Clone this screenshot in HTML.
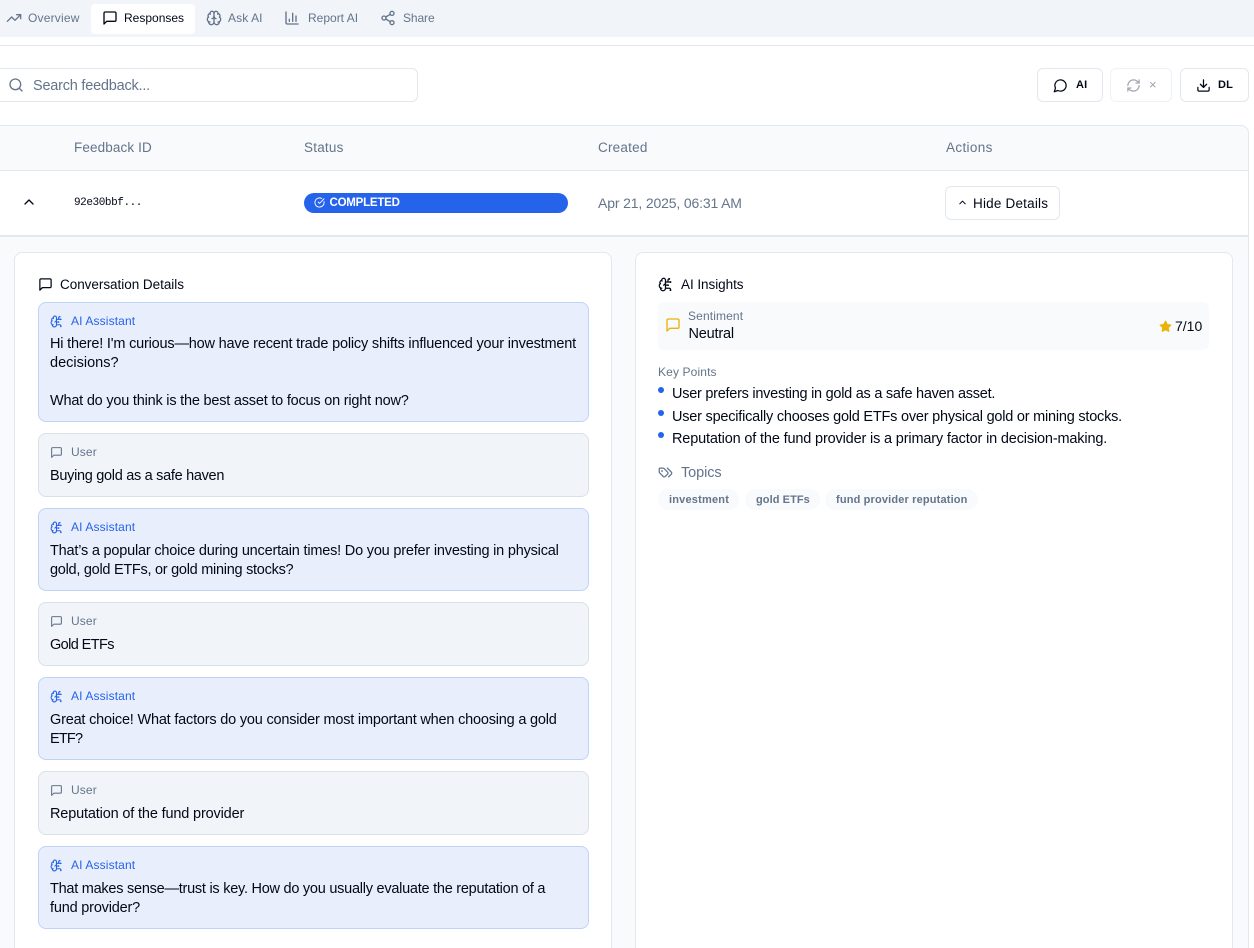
<!DOCTYPE html>
<html lang="en">
<head>
<meta charset="utf-8">
<title>Responses</title>
<style>
html,body{margin:0;padding:0;width:1254px;height:948px;overflow:hidden;background:#fff}
body{position:relative;font-family:"Liberation Sans",sans-serif;color:#020817}
.a{position:absolute;box-sizing:border-box}
.t{position:absolute;white-space:nowrap;font-size:14.5px;line-height:20px;letter-spacing:-.19px;color:#020817}
.s{position:absolute;fill:none;stroke:currentColor;stroke-width:2;stroke-linecap:round;stroke-linejoin:round}
.tab{font-size:12px;line-height:16px;color:#64748b;letter-spacing:.1px}
.hd{font-size:13.5px;line-height:20px;color:#64748b;letter-spacing:.22px}
.ai{background:#e8eefb;border:1px solid #bfd3f6;border-radius:8px;left:38px;width:551px}
.us{background:#f1f5f9;border:1px solid #d8e0ea;border-radius:8px;left:38px;width:551px}
.lb{font-size:12px;line-height:16px;letter-spacing:.13px}
.btn{background:#fff;border:1px solid #e2e8f0;border-radius:6px}
.dot{position:absolute;width:6px;height:6px;border-radius:50%;background:#2563eb;left:658px}
.pill{position:absolute;height:21px;border-radius:11px;background:#f8fafc;top:489px}
.pt{font-size:11px;font-weight:bold;line-height:16px;color:#64748b;letter-spacing:.2px}
.kp{font-size:14.5px;letter-spacing:-.22px}
.ti{font-size:13.5px;letter-spacing:0}
</style>
</head>
<body>
<svg width="0" height="0" style="position:absolute">
<defs>
<symbol id="msg" viewBox="0 0 24 24"><path d="M21 15a2 2 0 0 1-2 2H7l-4 4V5a2 2 0 0 1 2-2h14a2 2 0 0 1 2 2z"/></symbol>
<symbol id="bc" viewBox="0 0 24 24"><path d="M12 5a3 3 0 1 0-5.997.125 4 4 0 0 0-2.526 5.77 4 4 0 0 0 .556 6.588A4 4 0 1 0 12 18Z"/><path d="M9 13a4.5 4.5 0 0 0 3-4"/><path d="M6.003 5.125A3 3 0 0 0 6.401 6.5"/><path d="M3.477 10.896a4 4 0 0 1 .585-.396"/><path d="M6 18a4 4 0 0 1-1.967-.516"/><path d="M12 13h4"/><path d="M12 18h6a2 2 0 0 1 2 2v1"/><path d="M12 8h8"/><path d="M16 8V5a2 2 0 0 1 2-2"/><circle cx="16" cy="13" r=".5"/><circle cx="18" cy="3" r=".5"/><circle cx="20" cy="21" r=".5"/><circle cx="20" cy="8" r=".5"/></symbol>
</defs>
</svg>

<!-- tab bar -->
<div class="a" style="left:0;top:0;width:1254px;height:37px;background:#f1f5f9"></div>
<div class="a" style="left:0;top:45px;width:1254px;height:1px;background:#e2e8f0"></div>
<div class="a" style="left:91px;top:4px;width:104px;height:30px;background:#fff;border-radius:4px"></div>

<svg class="s" style="left:6px;top:10px;color:#64748b" width="16" height="16" viewBox="0 0 24 24"><polyline points="22 7 13.5 15.5 8.5 10.5 2 17"/><polyline points="16 7 22 7 22 13"/></svg>
<div class="t tab" style="left:28px;top:10px;letter-spacing:.2px">Overview</div>
<svg class="s" style="left:101.5px;top:10px;color:#020817" width="16" height="16"><use href="#msg"/></svg>
<div class="t tab" style="left:124px;top:10px;color:#020817;letter-spacing:0">Responses</div>
<svg class="s" style="left:205.5px;top:10px;color:#64748b" width="16" height="16" viewBox="0 0 24 24"><path d="M12 18V5"/><path d="M15 13a4.17 4.17 0 0 1-3-4 4.17 4.17 0 0 1-3 4"/><path d="M17.598 6.5A3 3 0 1 0 12 5a3 3 0 1 0-5.598 1.5"/><path d="M17.997 5.125a4 4 0 0 1 2.526 5.77"/><path d="M18 18a4 4 0 0 0 2-7.464"/><path d="M19.967 17.483A4 4 0 1 1 12 18a4 4 0 1 1-7.967-.517"/><path d="M6 18a4 4 0 0 1-2-7.464"/><path d="M6.003 5.125a4 4 0 0 0-2.526 5.77"/></svg>
<div class="t tab" style="left:228px;top:10px">Ask AI</div>
<svg class="s" style="left:284px;top:10px;color:#64748b" width="16" height="16" viewBox="0 0 24 24"><path d="M3 3v16a2 2 0 0 0 2 2h16"/><path d="M18 17V9"/><path d="M13 17V5"/><path d="M8 17v-3"/></svg>
<div class="t tab" style="left:308px;top:10px;letter-spacing:0">Report AI</div>
<svg class="s" style="left:380px;top:10px;color:#64748b" width="16" height="16" viewBox="0 0 24 24"><circle cx="18" cy="5" r="3"/><circle cx="6" cy="12" r="3"/><circle cx="18" cy="19" r="3"/><line x1="8.59" y1="13.51" x2="15.42" y2="17.49"/><line x1="15.41" y1="6.51" x2="8.59" y2="10.49"/></svg>
<div class="t tab" style="left:403px;top:10px;letter-spacing:-.1px">Share</div>

<!-- search -->
<div class="a" style="left:-10px;top:68px;width:428px;height:34px;border:1px solid #e2e8f0;border-radius:6px;background:#fff"></div>
<svg class="s" style="left:7.5px;top:77px;color:#64748b" width="16" height="16" viewBox="0 0 24 24"><circle cx="11" cy="11" r="8"/><path d="m21 21-4.3-4.3"/></svg>
<div class="t" style="left:33px;top:76px;color:#64748b;letter-spacing:-.22px">Search feedback...</div>

<!-- action buttons -->
<div class="a btn" style="left:1037px;top:68px;width:66px;height:34px"></div>
<svg class="s" style="left:1053px;top:78px;color:#020817" width="15" height="15" viewBox="0 0 24 24"><path d="M7.9 20A9 9 0 1 0 4 16.1L2 22Z"/></svg>
<div class="t" style="left:1076px;top:75px;font-size:11px;font-weight:bold;letter-spacing:.2px">AI</div>
<div class="a btn" style="left:1110px;top:68px;width:62px;height:34px;border-color:#eef2f6"></div>
<svg class="s" style="left:1126px;top:78px;color:#a3a8b0" width="15" height="15" viewBox="0 0 24 24"><path d="M3 12a9 9 0 0 1 9-9 9.75 9.75 0 0 1 6.74 2.74L21 8"/><path d="M21 3v5h-5"/><path d="M21 12a9 9 0 0 1-9 9 9.75 9.75 0 0 1-6.74-2.74L3 16"/><path d="M8 16H3v5"/></svg>
<div class="t" style="left:1149px;top:75px;font-size:13px;letter-spacing:0;color:#9ca3af">×</div>
<div class="a btn" style="left:1180px;top:68px;width:69px;height:34px"></div>
<svg class="s" style="left:1196px;top:78px;color:#020817" width="15" height="15" viewBox="0 0 24 24"><path d="M21 15v4a2 2 0 0 1-2 2H5a2 2 0 0 1-2-2v-4"/><polyline points="7 10 12 15 17 10"/><line x1="12" y1="15" x2="12" y2="3"/></svg>
<div class="t" style="left:1218px;top:75px;font-size:11px;font-weight:bold;letter-spacing:.2px">DL</div>

<!-- table -->
<div class="a" style="left:-10px;top:125px;width:1259px;height:840px;border:1px solid #e2e8f0;border-radius:8px;background:#f8fafc"></div>
<div class="a" style="left:-9px;top:170px;width:1257px;height:1px;background:#e2e8f0"></div>
<div class="a" style="left:-9px;top:171px;width:1257px;height:66px;background:#fff;border-bottom:2px solid #e2e8f0"></div>

<div class="t hd" style="left:74px;top:138px;letter-spacing:.12px">Feedback ID</div>
<div class="t hd" style="left:304px;top:138px">Status</div>
<div class="t hd" style="left:598px;top:138px">Created</div>
<div class="t hd" style="left:946px;top:138px;letter-spacing:.35px">Actions</div>

<svg class="s" style="left:21px;top:194px;color:#020817" width="16" height="16" viewBox="0 0 24 24"><path d="m18 15-6-6-6 6"/></svg>
<div class="t" style="left:74px;top:192.5px;font-family:'Liberation Mono',monospace;font-size:11px;letter-spacing:-.42px">92e30bbf...</div>

<div class="a" style="left:304px;top:193px;width:264px;height:20px;background:#2563eb;border-radius:10px"></div>
<svg class="s" style="left:314px;top:197px;color:#fff" width="11" height="11" viewBox="0 0 24 24"><path d="M21.801 10A10 10 0 1 1 17 3.335"/><path d="m9 11 3 3L22 4"/></svg>
<div class="t" style="left:329.5px;top:192.5px;font-size:11.5px;font-weight:bold;color:#fff;letter-spacing:-.22px">COMPLETED</div>

<div class="t" style="left:598px;top:193px;font-size:14px;color:#64748b;letter-spacing:-.15px">Apr 21, 2025, 06:31 AM</div>

<div class="a btn" style="left:945px;top:186px;width:115px;height:34px"></div>
<svg class="s" style="left:957px;top:197px;color:#020817" width="11" height="11" viewBox="0 0 24 24"><path d="m18 15-6-6-6 6"/></svg>
<div class="t" style="left:973px;top:193.5px;font-size:13.5px;letter-spacing:.2px">Hide Details</div>

<!-- left card -->
<div class="a" style="left:14px;top:252px;width:598px;height:720px;background:#fff;border:1px solid #e2e8f0;border-radius:8px"></div>
<svg class="s" style="left:38px;top:277px;color:#020817" width="15" height="15"><use href="#msg"/></svg>
<div class="t ti" style="left:60px;top:275px;letter-spacing:-.03px">Conversation Details</div>

<div class="a ai" style="top:302px;height:120px"></div>
<svg class="s" style="left:50px;top:315px;color:#2563eb" width="13" height="13"><use href="#bc"/></svg>
<div class="t lb" style="left:71px;top:313px;color:#2563eb">AI Assistant</div>
<div class="t" style="left:50px;top:334px">Hi there! I'm curious—how have recent trade policy shifts influenced your investment</div>
<div class="t" style="left:50px;top:353px;letter-spacing:0">decisions?</div>
<div class="t" style="left:50px;top:391px;letter-spacing:-.21px">What do you think is the best asset to focus on right now?</div>

<div class="a us" style="top:433px;height:64px"></div>
<svg class="s" style="left:50px;top:446px;color:#64748b" width="13" height="13"><use href="#msg"/></svg>
<div class="t lb" style="left:71px;top:444px;color:#64748b">User</div>
<div class="t" style="left:50px;top:466px;letter-spacing:-.3px">Buying gold as a safe haven</div>

<div class="a ai" style="top:508px;height:83px"></div>
<svg class="s" style="left:50px;top:521px;color:#2563eb" width="13" height="13"><use href="#bc"/></svg>
<div class="t lb" style="left:71px;top:519px;color:#2563eb">AI Assistant</div>
<div class="t" style="left:50px;top:541px;letter-spacing:-.2px">That’s a popular choice during uncertain times! Do you prefer investing in physical</div>
<div class="t" style="left:50px;top:560px;letter-spacing:-.27px">gold, gold ETFs, or gold mining stocks?</div>

<div class="a us" style="top:602px;height:64px"></div>
<svg class="s" style="left:50px;top:615px;color:#64748b" width="13" height="13"><use href="#msg"/></svg>
<div class="t lb" style="left:71px;top:613px;color:#64748b">User</div>
<div class="t" style="left:50px;top:635px;letter-spacing:-.6px">Gold ETFs</div>

<div class="a ai" style="top:677px;height:83px"></div>
<svg class="s" style="left:50px;top:690px;color:#2563eb" width="13" height="13"><use href="#bc"/></svg>
<div class="t lb" style="left:71px;top:688px;color:#2563eb">AI Assistant</div>
<div class="t" style="left:50px;top:710px;letter-spacing:-.2px">Great choice! What factors do you consider most important when choosing a gold</div>
<div class="t" style="left:50px;top:729px;letter-spacing:-.8px">ETF?</div>

<div class="a us" style="top:771px;height:64px"></div>
<svg class="s" style="left:50px;top:784px;color:#64748b" width="13" height="13"><use href="#msg"/></svg>
<div class="t lb" style="left:71px;top:782px;color:#64748b">User</div>
<div class="t" style="left:50px;top:804px;letter-spacing:-.16px">Reputation of the fund provider</div>

<div class="a ai" style="top:846px;height:83px"></div>
<svg class="s" style="left:50px;top:859px;color:#2563eb" width="13" height="13"><use href="#bc"/></svg>
<div class="t lb" style="left:71px;top:857px;color:#2563eb">AI Assistant</div>
<div class="t" style="left:50px;top:879px;letter-spacing:-.25px">That makes sense—trust is key. How do you usually evaluate the reputation of a</div>
<div class="t" style="left:50px;top:898px">fund provider?</div>

<!-- right card -->
<div class="a" style="left:635px;top:252px;width:598px;height:720px;background:#fff;border:1px solid #e2e8f0;border-radius:8px"></div>
<svg class="s" style="left:657.5px;top:277px;color:#020817" width="15" height="15"><use href="#bc"/></svg>
<div class="t ti" style="left:681px;top:275px;letter-spacing:-.05px">AI Insights</div>

<div class="a" style="left:658px;top:302px;width:551px;height:48px;background:#f8fafc;border-radius:6px"></div>
<svg class="s" style="left:665px;top:317px;color:#eab308" width="16" height="16"><use href="#msg"/></svg>
<div class="t lb" style="left:688px;top:308px;color:#64748b">Sentiment</div>
<div class="t" style="left:688.5px;top:324px">Neutral</div>
<svg style="position:absolute;left:1159px;top:320px" width="13" height="13" viewBox="0 0 24 24" fill="#eab308" stroke="#eab308" stroke-width="2" stroke-linejoin="round"><polygon points="12 2 15.09 8.26 22 9.27 17 14.14 18.18 21.02 12 17.77 5.82 21.02 7 14.14 2 9.27 8.91 8.26 12 2"/></svg>
<div class="t" style="left:1175px;top:316px;font-size:14px;letter-spacing:0">7/10</div>

<div class="t lb" style="left:658px;top:364px;color:#64748b">Key Points</div>
<div class="dot" style="top:387px"></div>
<div class="t kp" style="left:672px;top:384px;letter-spacing:-.26px">User prefers investing in gold as a safe haven asset.</div>
<div class="dot" style="top:410px"></div>
<div class="t kp" style="left:672px;top:407px">User specifically chooses gold ETFs over physical gold or mining stocks.</div>
<div class="dot" style="top:432px"></div>
<div class="t kp" style="left:672px;top:429px;letter-spacing:-.16px">Reputation of the fund provider is a primary factor in decision-making.</div>

<svg class="s" style="left:658px;top:465px;color:#64748b" width="15" height="15" viewBox="0 0 24 24"><path d="m15 5 6.3 6.3a2.4 2.4 0 0 1 0 3.4L17 19"/><path d="M9.586 5.586A2 2 0 0 0 8.172 5H3a1 1 0 0 0-1 1v5.172a2 2 0 0 0 .586 1.414L8.29 18.29a2.426 2.426 0 0 0 3.42 0l3.58-3.58a2.426 2.426 0 0 0 0-3.42z"/><circle cx="6.5" cy="9.5" r=".5"/></svg>
<div class="t" style="left:681px;top:463px;letter-spacing:-.1px;color:#64748b">Topics</div>

<div class="pill" style="left:658px;width:81px"></div>
<div class="t pt" style="left:669px;top:491.5px">investment</div>
<div class="pill" style="left:745px;width:75px"></div>
<div class="t pt" style="left:756px;top:491.5px;letter-spacing:.08px">gold ETFs</div>
<div class="pill" style="left:825px;width:153px"></div>
<div class="t pt" style="left:836px;top:491.5px;letter-spacing:.16px">fund provider reputation</div>
</body>
</html>
